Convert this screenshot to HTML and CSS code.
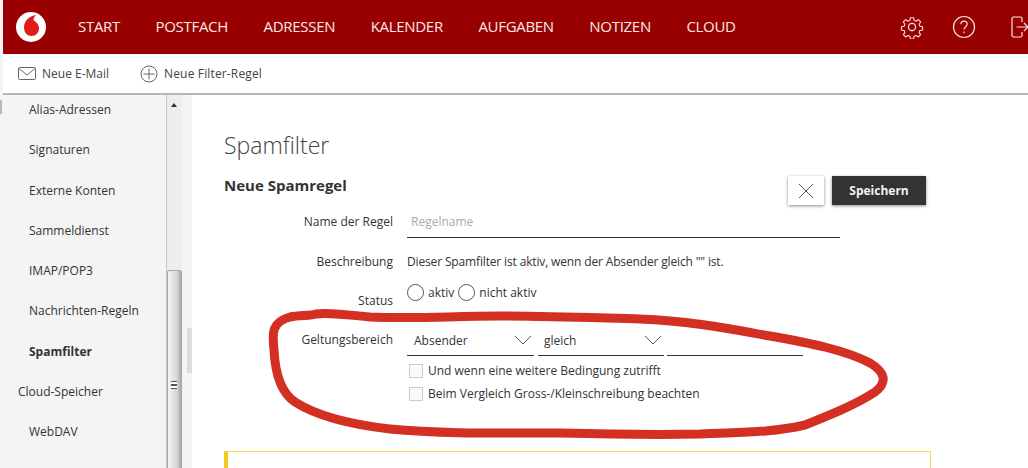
FILE: index.html
```html
<!DOCTYPE html>
<html>
<head>
    <meta charset="utf-8" />
    <title>Spamfilter</title>
    <link rel="stylesheet" href="styles.css">
</head>
<body>
    <div class="leftEdge"><span class="edgeMark"></span></div>
    <div class="app">
        <header class="top">
            <svg class="logo" width="30" height="30" viewBox="0 0 30 30">
                <circle cx="15" cy="15" r="15" fill="#fff" />
                <path d="M20 3C13 4 8 9 8 15.500C8 20.500 11.500 24 15.500 24C19.800 24 23 20.700 23 16.500C23 12.500 20.500 10 17.500 8.500C17.500 6.500 18.500 4.500 20 3Z" fill="#e01b1b" />
            </svg>
            <nav class="mainNav">
                <a>START</a>
                <a>POSTFACH</a>
                <a>ADRESSEN</a>
                <a>KALENDER</a>
                <a>AUFGABEN</a>
                <a>NOTIZEN</a>
                <a>CLOUD</a>
            </nav>
            <div class="topIcons">
                <svg width="24" height="24" viewBox="0 0 24 24" fill="none" stroke="#f6e6e6" stroke-width="1.200">
                    <circle cx="12" cy="12" r="3.600" />
                    <path d="M10.200 1.700h3.600l.6 3 2.100.9 2.600-1.700 2.500 2.500-1.700 2.600.9 2.100 3 .6v3.600l-3 .6-.9 2.100 1.700 2.600-2.500 2.500-2.600-1.700-2.100.9-.6 3h-3.600l-.6-3-2.100-.9-2.600 1.700-2.500-2.500 1.700-2.600-.9-2.100-3-.6v-3.600l3-.6.9-2.100-1.700-2.600 2.500-2.500 2.600 1.700 2.100-.9z" transform="translate(1.200 1.200) scale(.9)" stroke-linejoin="round" />
                </svg>
                <svg width="24" height="24" viewBox="0 0 24 24" fill="none" stroke="#f6e6e6" stroke-width="1.200">
                    <circle cx="12" cy="12" r="10.500" />
                    <path d="M8.800 9.300c0-1.900 1.400-3.200 3.200-3.200s3.200 1.200 3.200 3c0 2.600-3.200 2.700-3.200 5.500" />
                    <path d="M12 16.500v1.800" />
                </svg>
                <svg class="exitIcon" width="24" height="24" viewBox="0 0 24 24" fill="none" stroke="#f6e6e6" stroke-width="1.200">
                    <path d="M11 7V3.500A1.500 1.500 0 0 0 9.500 2h-7A1.500 1.500 0 0 0 1 3.500v17A1.500 1.500 0 0 0 2.500 22h7a1.500 1.500 0 0 0 1.500-1.500V17" />
                    <path d="M5.500 12H17M13 8l4 4-4 4" />
                </svg>
            </div>
        </header>
        <div class="toolbar">
            <a class="tool">
                <svg width="18" height="14" viewBox="0 0 18 14" fill="none" stroke="#666" stroke-width="1">
                    <rect x=".5" y=".5" width="17" height="12" rx="1" />
                    <path d="M1 1.500 9 8l8-6.500" />
                </svg>
                Neue E-Mail
            </a>
            <a class="tool toolWide">
                <svg width="18" height="18" viewBox="0 0 18 18" fill="none" stroke="#666" stroke-width="1">
                    <circle cx="9" cy="9" r="8" />
                    <path d="M9 3.500v11M3.500 9h11" />
                </svg>
                Neue Filter-Regel
            </a>
        </div>
        <div class="columns">
            <aside class="side">
                <ul class="sideList">
                    <li class="sub">Alias-Adressen</li>
                    <li class="sub">Signaturen</li>
                    <li class="sub">Externe Konten</li>
                    <li class="sub">Sammeldienst</li>
                    <li class="sub">IMAP/POP3</li>
                    <li class="sub">Nachrichten-Regeln</li>
                    <li class="sub active">Spamfilter</li>
                    <li>Cloud-Speicher</li>
                    <li class="sub">WebDAV</li>
                    <li class="sub">Team</li>
                </ul>
                <div class="scrollbar">
                    <span class="arrowUp"></span>
                    <div class="thumb"><span class="grip"></span></div>
                </div>
            </aside>
            <div class="outerBar"><div class="outerThumb"></div></div>
            <main class="content">
                <h1>Spamfilter</h1>
                <div class="headRow">
                    <h2>Neue Spamregel</h2>
                    <div class="actions">
                        <button class="btnClose">
                            <svg width="16" height="16" viewBox="0 0 16 16" stroke="#555" stroke-width="1"><path d="M1 1l14 14M15 1 1 15" /></svg>
                        </button>
                        <button class="btnSave">Speichern</button>
                    </div>
                </div>
                <form class="rule">
                    <label class="lbl lblName">Name der Regel</label>
                    <div class="nameField">Regelname</div>

                    <label class="lbl">Beschreibung</label>
                    <div class="desc">Dieser Spamfilter ist aktiv, wenn der Absender gleich "" ist.</div>

                    <label class="lbl lblStatus">Status</label>
                    <div class="radios">
                        <span class="radio"></span><span class="radioText">aktiv</span>
                        <span class="radio"></span><span class="radioText">nicht aktiv</span>
                    </div>

                    <label class="lbl lblScope">Geltungsbereich</label>
                    <div class="scope">
                        <div class="selects">
                            <div class="sel selFrom">Absender
                                <svg width="18" height="10" viewBox="0 0 18 10" fill="none" stroke="#555"><path d="M1 1l8 8 8-8" /></svg>
                            </div>
                            <div class="sel selIs">gleich
                                <svg width="18" height="10" viewBox="0 0 18 10" fill="none" stroke="#555"><path d="M1 1l8 8 8-8" /></svg>
                            </div>
                            <div class="valueField"></div>
                        </div>
                        <div class="check"><span class="box"></span>Und wenn eine weitere Bedingung zutrifft</div>
                        <div class="check"><span class="box"></span>Beim Vergleich Gross-/Kleinschreibung beachten</div>
                    </div>
                </form>
                <div class="notice"></div>
            </main>
        </div>
    </div>
    <!-- hand drawn marker ring on top of the screenshot -->
    <svg class="marker" width="1028" height="468" viewBox="0 0 1028 468" fill="none">
        <path d="M290 317C300 315 310 316 316 314C330 312 345 315 370 317C420 319 450 316 500 316C550 316 600 318 640 319C690 321 730 329 770 336C810 343 845 350 870 363C885 372 888 382 875 392C855 405 830 415 805 425C770 433 740 432 700 434C650 435 600 434 560 433C500 433 440 434 390 429C355 425 320 418 295 402C280 392 275 370 274 350C272 332 272 322 290 317Z" stroke="#d32f22" stroke-width="9" stroke-linejoin="round" />
    </svg>
</body>
</html>
```
FILE: styles.css
```css
html, body {
    margin: 0;
    padding: 0;
    height: 468px;
    overflow: hidden;
}

body {
    display: flex;
    font-family: "Open Sans", "Liberation Sans", sans-serif;
    font-size: 12px;
    color: #333;
    background-color: #fff;
}

.leftEdge {
    width: 3px;
    flex-shrink: 0;
    background-color: #f4f4f4;
    position: relative;
}

.edgeMark {
    position: absolute;
    left: 0;
    top: 100px;
    width: 2px;
    height: 14px;
    background-color: #b8b8b8;
}

.app {
    flex: 1;
    min-width: 0;
}

.top {
    height: 54px;
    display: flex;
    align-items: center;
    background-color: #990000;
    color: #fff;
}

.logo {
    margin-left: 13px;
    flex-shrink: 0;
}

.mainNav {
    display: flex;
    gap: 35.5px;
    margin-left: 32px;
    padding-bottom: 2px;
    font-size: 15px;
    letter-spacing: -0.3px;
    color: #f8e8e8;
}

.topIcons {
    display: flex;
    align-items: center;
    gap: 28px;
    margin-left: auto;
    margin-right: -7px;
}

.exitIcon {
    margin-left: 7px;
}

.toolbar {
    height: 39px;
    display: flex;
    align-items: center;
    gap: 31px;
    padding-left: 15px;
    background-color: #fff;
    border-bottom: 2px solid #b5b5b5;
}

.tool {
    display: flex;
    align-items: center;
    gap: 6px;
    color: #444;
}

.toolWide {
    letter-spacing: 0.15px;
}

.columns {
    display: flex;
    height: 373px;
    overflow: hidden;
}

.side {
    width: 184px;
    flex-shrink: 0;
    display: flex;
    overflow: hidden;
    background-color: #f4f4f4;
}

.sideList {
    list-style: none;
    margin: 0;
    padding: 0;
    width: 163px;
    flex-shrink: 0;
}

.sideList li {
    height: 40.3px;
    line-height: 30px;
    padding-left: 15px;
    white-space: nowrap;
}

.sideList .sub {
    padding-left: 26px;
}

.sideList .active {
    font-weight: 700;
}

.scrollbar {
    width: 15px;
    border-left: 1px solid #c4c4c4;
    background-color: #ededed;
    position: relative;
}

.arrowUp {
    position: absolute;
    left: 4px;
    top: 8px;
    border-left: 3px solid transparent;
    border-right: 3px solid transparent;
    border-bottom: 4px solid #333;
}

.thumb {
    margin-top: 175px;
    height: 210px;
    border: 1px solid #a9a9a9;
    border-radius: 2px;
    background: linear-gradient(to right, #f4f4f4, #d6d6d6 70%, #a8a8a8);
    position: relative;
}

.grip {
    position: absolute;
    left: 3px;
    top: 110px;
    width: 6px;
    height: 6px;
    border-top: 1px solid #555;
    border-bottom: 1px solid #555;
    background: linear-gradient(#fff 40%, #555 40%, #555 60%, #fff 60%);
}

.outerBar {
    width: 5px;
    flex-shrink: 0;
    background-color: #f4f4f4;
}

.outerThumb {
    margin-top: 233px;
    height: 45px;
    background-color: #dcdcdc;
}

.content {
    flex: 1;
    min-width: 0;
    padding: 0 97px 0 32px;
}

h1 {
    margin: 33px 0 0 0;
    font-size: 23px;
    font-weight: 300;
    line-height: 34px;
    color: #444;
}

.headRow {
    display: flex;
    justify-content: space-between;
    align-items: flex-start;
    height: 46px;
}

h2 {
    margin: 12px 0 0 0;
    font-size: 15px;
    line-height: 22px;
    font-weight: 700;
    color: #333;
}

.actions {
    display: flex;
    gap: 8px;
    margin: 14px 5px 0 0;
}

.actions button {
    height: 29px;
    padding: 0;
    border: 0;
    box-shadow: 0 1px 3px rgba(0, 0, 0, 0.45);
    font-family: inherit;
}

.btnClose {
    width: 36px;
    display: flex;
    align-items: center;
    justify-content: center;
    background-color: #fff;
}

.btnSave {
    width: 94px;
    background-color: #333;
    color: #f2f2f2;
    font-size: 12px;
    font-weight: 700;
}

.rule {
    display: grid;
    grid-template-columns: 169px 1fr;
    column-gap: 14px;
    align-items: start;
}

.lbl {
    text-align: right;
    line-height: 18px;
}

.lblName {
    margin-top: 5px;
}

.nameField {
    width: 433px;
    height: 30px;
    margin-bottom: 15px;
    line-height: 28px;
    padding-left: 4px;
    box-sizing: border-box;
    border-bottom: 1px solid #333;
    color: #aaa;
}

.desc {
    height: 18px;
    line-height: 18px;
    margin-bottom: 11px;
    letter-spacing: -0.15px;
}

.lblStatus {
    margin-top: 10px;
}

.radios {
    display: flex;
    align-items: center;
    height: 20px;
    margin-bottom: 26px;
}

.radio {
    width: 15px;
    height: 15px;
    border: 1px solid #555;
    border-radius: 50%;
    margin-right: 4px;
}

.radioText {
    margin-right: 4px;
}

.lblScope {
    margin-top: 3px;
}

.selects {
    display: flex;
    margin-bottom: 3px;
}

.sel {
    height: 28px;
    display: flex;
    align-items: center;
    justify-content: space-between;
    padding: 0 2px 3px 7px;
    box-sizing: border-box;
    border-bottom: 1px solid #333;
}

.selFrom {
    width: 127px;
    margin-right: 4px;
}

.selIs {
    width: 126px;
    margin-right: 3px;
    padding-left: 6px;
}

.valueField {
    width: 136px;
    height: 28px;
    box-sizing: border-box;
    border-bottom: 1px solid #333;
}

.check {
    display: flex;
    align-items: center;
    gap: 5px;
    height: 23px;
    margin-left: 2px;
}

.box {
    width: 14px;
    height: 14px;
    border: 1px solid #ccc;
    box-sizing: border-box;
    background-color: #fafafa;
}

.notice {
    margin-top: 46px;
    height: 60px;
    border: 1px solid #f0dc60;
    border-left: 4px solid #f5c922;
}

.marker {
    position: absolute;
    left: 0;
    top: 0;
    pointer-events: none;
}
```
